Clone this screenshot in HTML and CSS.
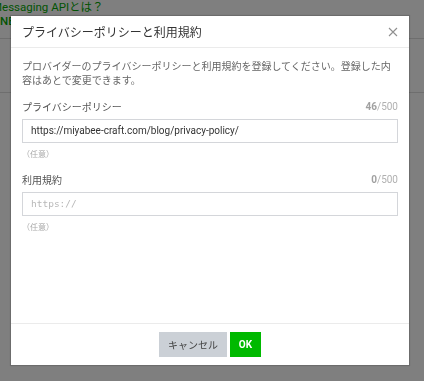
FILE: index.html
```html
<!DOCTYPE html>
<html lang="ja">
<head>
<meta charset="utf-8">
<title>プライバシーポリシーと利用規約</title>
<link rel="stylesheet" href="styles.css">
</head>
<body>
<div class="page">
  <div class="page-link">Messaging APIとは？</div>
  <div class="page-link second">LINE</div>
  <div class="page-rule"></div>
  <div class="page-rule short"></div>
</div>
<div class="overlay">
  <div class="modal">
    <div class="modal-header">
      <div class="modal-title">プライバシーポリシーと利用規約</div>
      <svg class="close" width="10" height="10" viewBox="0 0 10 10"><path d="M1 1L9 9M9 1L1 9" stroke="#909090" stroke-width="1.1" fill="none"/></svg>
    </div>
    <div class="modal-body">
      <p class="desc">プロバイダーのプライバシーポリシーと利用規約を登録してください。登録した内容はあとで変更できます。</p>
      <div class="field">
        <div class="field-head"><span class="label">プライバシーポリシー</span><span class="count"><b>46</b>/500</span></div>
        <div class="input">https://miyabee-craft.com/blog/privacy-policy/</div>
        <div class="hint">（任意）</div>
      </div>
      <div class="field">
        <div class="field-head"><span class="label">利用規約</span><span class="count"><b>0</b>/500</span></div>
        <div class="input placeholder">https://</div>
        <div class="hint">（任意）</div>
      </div>
    </div>
    <div class="modal-footer">
      <button class="btn cancel">キャンセル</button>
      <button class="btn ok">OK</button>
    </div>
  </div>
</div>
</body>
</html>
```

FILE: styles.css
```css
html, body {
  margin: 0;
  padding: 0;
}
body {
  width: 424px;
  height: 381px;
  overflow: hidden;
  background: #ffffff;
  font-family: "Noto Sans CJK JP", sans-serif;
}
.page-link {
  font-family: Roboto, "Noto Sans CJK JP", sans-serif;
  font-size: 11.5px;
  line-height: 14px;
  color: #04a804;
  margin-left: -8px;
  white-space: nowrap;
}
.page-link.second {
  margin-left: -9.5px;
  font-weight: 500;
}
.page-rule {
  margin-top: 10px;
  height: 1px;
  background: #dddddd;
}
.page-rule.short {
  margin-top: 53px;
}
.overlay {
  position: fixed;
  inset: 0;
  background: rgba(0, 0, 0, 0.5);
  padding: 16px 0 0 11px;
}
.modal {
  width: 398px;
  height: 349px;
  background: #ffffff;
  display: flex;
  flex-direction: column;
  box-shadow: 0 0 1px 1px rgba(0, 0, 0, 0.15);
}
.modal-header {
  height: 31px;
  border-bottom: 1px solid #ebebeb;
  display: flex;
  align-items: center;
  justify-content: space-between;
  padding: 0 11px 0 11px;
}
.modal-title {
  font-size: 12px;
  color: #333333;
  line-height: 16px;
}
.close {
  display: block;
}
.modal-body {
  flex: 1;
  padding: 11px 11px 0 11px;
}
.desc {
  margin: 0;
  font-size: 10px;
  line-height: 14px;
  color: #666666;
}
.field {
  margin-top: 12px;
}
.field-head {
  display: flex;
  justify-content: space-between;
  align-items: center;
  height: 14px;
}
.label {
  font-size: 10px;
  color: #555555;
}
.count {
  font-family: Roboto, sans-serif;
  font-size: 10px;
  color: #b0b0b0;
}
.count b {
  font-weight: 700;
  color: #a0a0a0;
}
.input {
  margin-top: 6px;
  height: 22px;
  border: 1px solid #d4d6da;
  padding: 0 8px;
  font-family: Roboto, sans-serif;
  font-size: 10px;
  line-height: 22px;
  color: #333333;
  white-space: nowrap;
}
.input.placeholder {
  font-family: "DejaVu Sans Mono", monospace;
  font-size: 9.5px;
  color: #b8b8b8;
}
.hint {
  margin-top: 5px;
  font-size: 8px;
  line-height: 12px;
  color: #aaaaaa;
}
.modal-footer {
  border-top: 1px solid #ebebeb;
  padding: 8px 0;
  display: flex;
  justify-content: center;
  gap: 3px;
}
.btn {
  height: 25px;
  border: 0;
  border-radius: 0;
  padding: 0 9px;
  font-family: "Noto Sans CJK JP", sans-serif;
  font-size: 10px;
  cursor: pointer;
}
.btn.cancel {
  width: 68px;
  background: #cbd0d6;
  color: #444444;
}
.btn.ok {
  width: 31px;
  background: #00b900;
  color: #ffffff;
  font-family: Roboto, sans-serif;
  font-weight: 700;
  padding: 0;
}
```
